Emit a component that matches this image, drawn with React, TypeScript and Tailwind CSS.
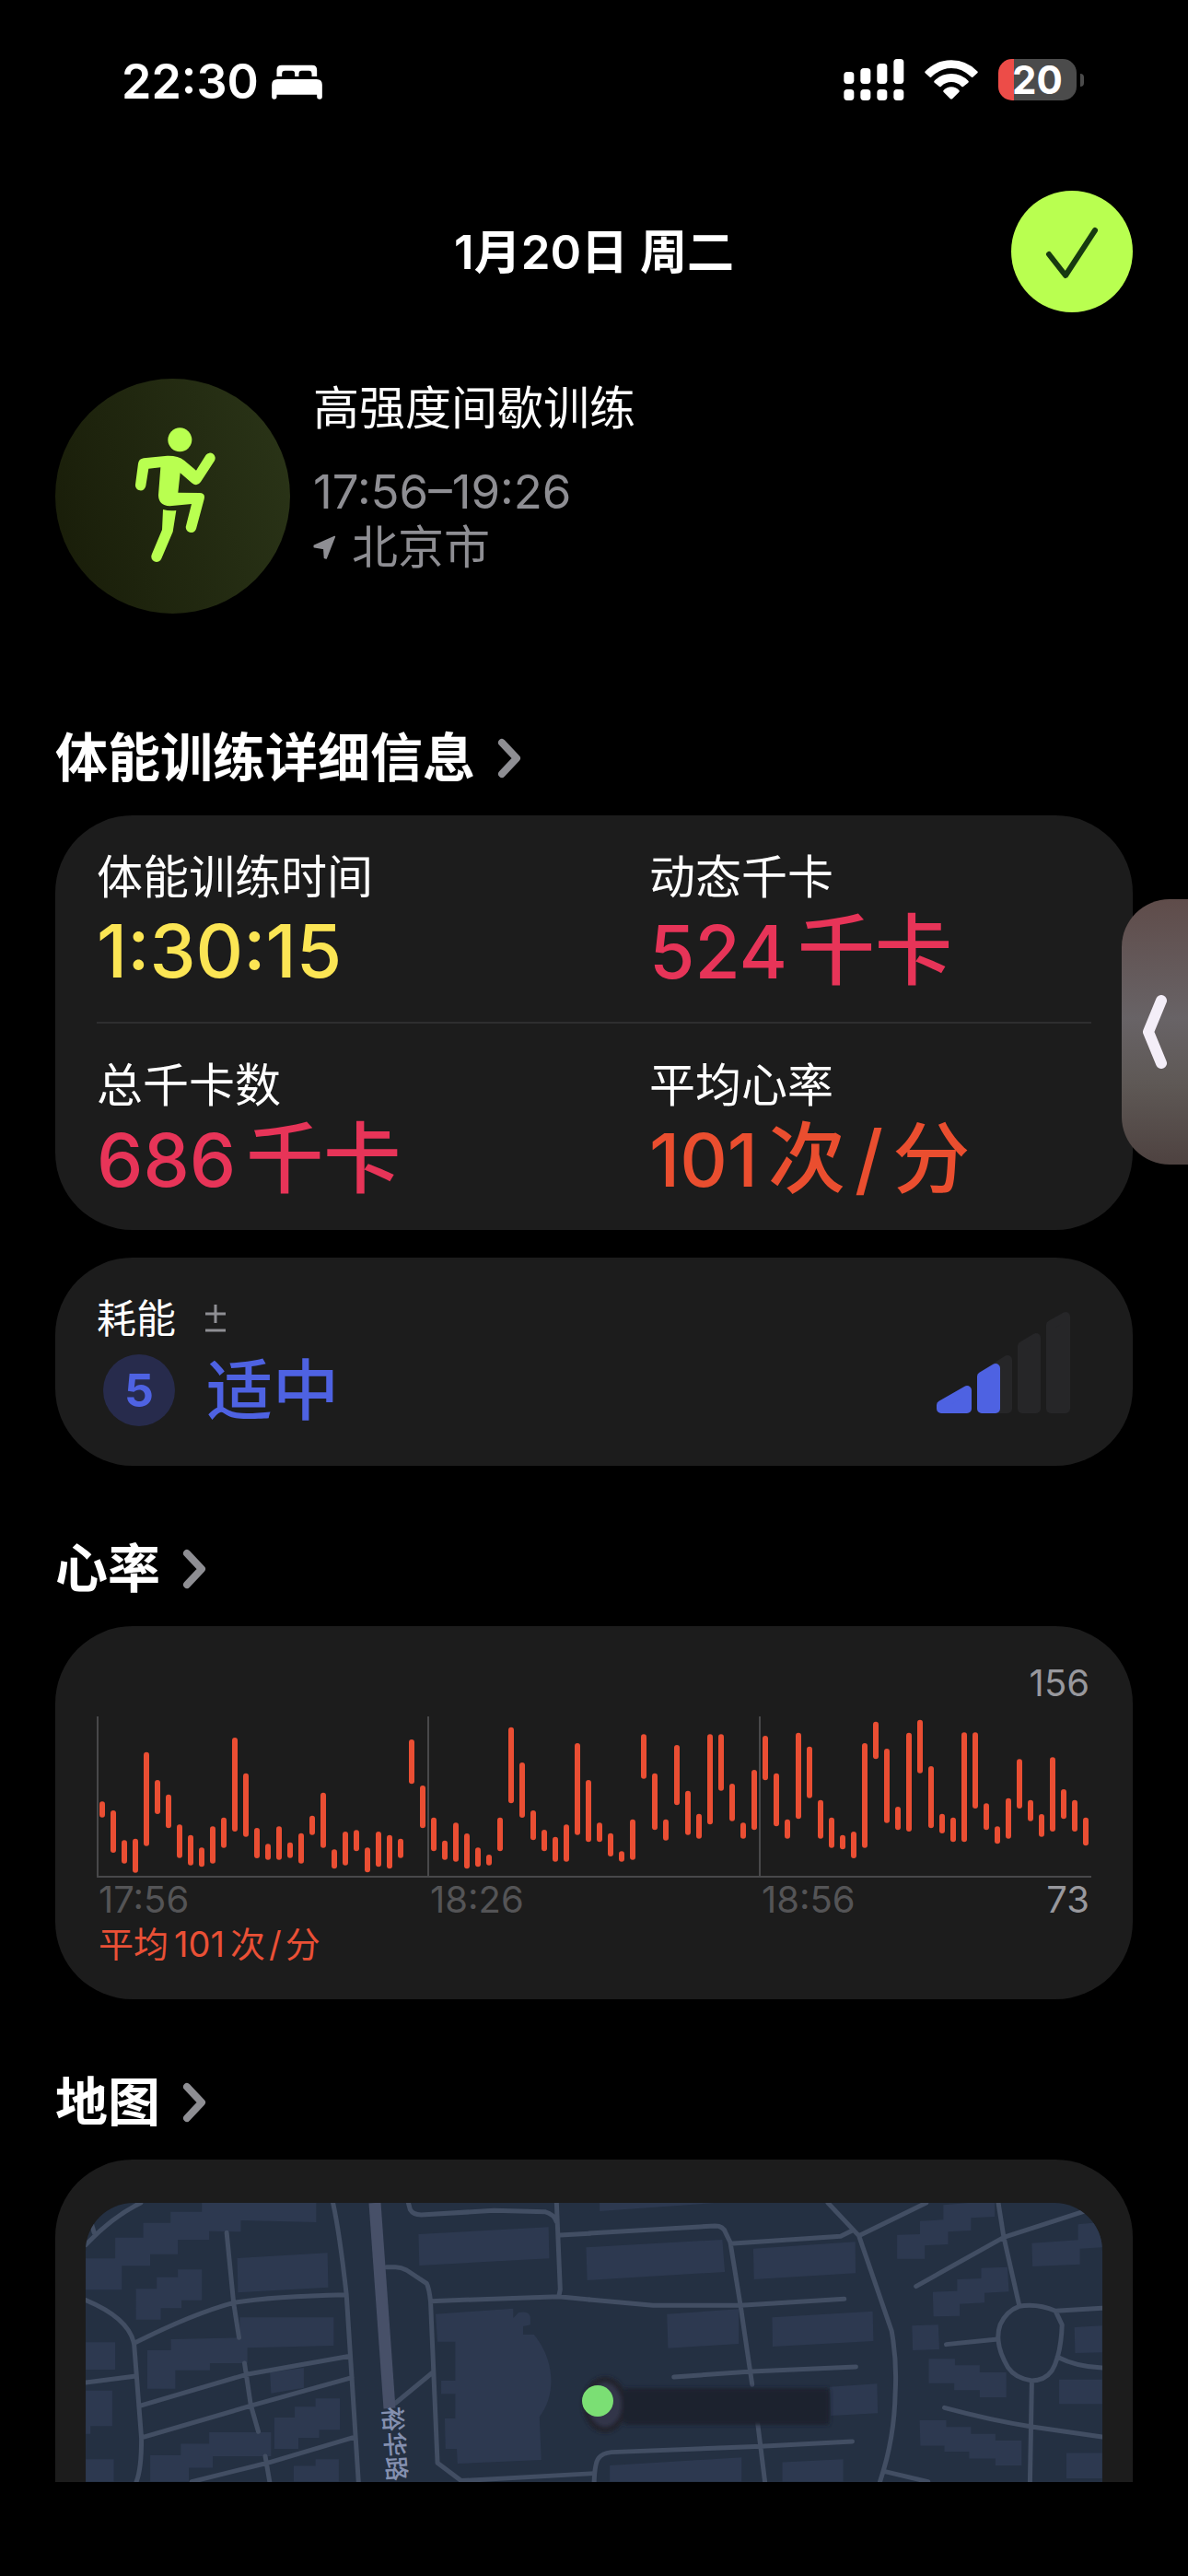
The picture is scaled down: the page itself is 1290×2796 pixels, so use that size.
import React from "react";

type Metric = { label: string; value: string; unit?: string[]; color: string };

const metrics: Metric[] = [
  { label: "体能训练时间", value: "1:30:15", color: "text-[#fbe554]" },
  { label: "动态千卡", value: "524", unit: ["千卡"], color: "text-[#e73458]" },
  { label: "总千卡数", value: "686", unit: ["千卡"], color: "text-[#e73458]" },
  { label: "平均心率", value: "101", unit: ["次", "/", "分"], color: "text-[#ea4e2f]" },
];

// [top, bottom] of every one-minute heart-rate range, in thirds of a pixel below the chart top
const ranges: [number, number][] = [
  [277, 329], [306, 444], [403, 479], [398, 509], [116, 422], [207, 318], [254, 364], [352, 461], [386, 485], [427, 490],
  [358, 479], [329, 428], [69, 375], [185, 392], [363, 462], [415, 467], [358, 467], [410, 461], [380, 479], [323, 386],
  [248, 428], [433, 496], [375, 485], [370, 439], [427, 508], [375, 490], [386, 496], [398, 461], [75, 220], [225, 364],
  [329, 439], [404, 467], [346, 473], [381, 496], [427, 490], [450, 485], [329, 439], [35, 283], [150, 330], [306, 403],
  [369, 439], [392, 473], [352, 473], [87, 386], [207, 409], [346, 409], [380, 456], [439, 473], [335, 467], [58, 203],
  [185, 370], [335, 404], [93, 289], [242, 386], [317, 398], [58, 352], [58, 242], [219, 341], [346, 398], [174, 370],
  [63, 208], [185, 358], [335, 398], [53, 334], [98, 266], [272, 398], [329, 428], [386, 433], [375, 462], [87, 428],
  [17, 139], [105, 347], [294, 370], [53, 375], [11, 185], [162, 364], [317, 381], [329, 409], [52, 409], [52, 300],
  [283, 370], [358, 415], [266, 398], [139, 300], [272, 341], [318, 392], [133, 375], [237, 334], [272, 375], [329, 421],
];

function Chevron() {
  return (
    <svg className="h-[44px] w-[28px]" viewBox="0 0 28 44" fill="none" stroke="#8e8e93" strokeWidth="8" strokeLinecap="round" strokeLinejoin="round" aria-hidden="true">
      <path d="M5 5 L21 22 L5 39" />
    </svg>
  );
}

function SectionLink({ children }: { children: string }) {
  return (
    <h2 className="text-[57px] leading-[72px] font-bold text-white">
      <a href="#" className="inline-flex items-center gap-6">
        {children}
        <Chevron />
      </a>
    </h2>
  );
}

function StatusBar() {
  return (
    <div className="flex h-[108px] items-end justify-between pr-[113px] pl-[132px] pt-16 text-white">
      <div className="flex h-[39px] items-center gap-[14px]">
        <span className="text-[52px] leading-[48px] font-semibold">22:30</span>
        <svg className="h-[38px] w-[55px]" viewBox="522 58 164 114" fill="#fff" aria-hidden="true">
          <path d="M538 97 V76 Q538 60 554 60 H653 Q669 60 669 76 V97 H652 V88 Q652 78 643 78 H619 Q610 78 610 88 V97 H597 V88 Q597 78 588 78 H565 Q555 78 555 88 V97Z" />
          <path d="M522 163 V124 Q522 106 540 106 H668 Q686 106 686 124 V163 Q686 171 678 171 Q669 171 669 163 V156 H538 V163 Q538 171 530 171 Q522 171 522 163Z" />
        </svg>
      </div>
      <div className="flex h-[43px] items-center gap-[22px]">
        <svg className="h-[45px] w-[66px]" viewBox="48 42 196 135" fill="#fff" aria-hidden="true">
          <rect x="48" y="84" width="33" height="39" rx="11" />
          <rect x="102" y="72" width="33" height="51" rx="11" />
          <rect x="156" y="57" width="33" height="66" rx="11" />
          <rect x="210" y="42" width="33" height="81" rx="11" />
          <rect x="48" y="141" width="33" height="36" rx="11" />
          <rect x="102" y="141" width="33" height="36" rx="11" />
          <rect x="156" y="141" width="33" height="36" rx="11" />
          <rect x="210" y="141" width="33" height="36" rx="11" />
        </svg>
        <svg className="h-[43px] w-[58px]" viewBox="311 45 174 127" fill="#fff" aria-hidden="true">
          <path d="M312 82 Q348 45 398 45 Q448 45 484 82 Q485 85 483 87 L468 100 Q465 102 462 99 Q433 71 398 71 Q363 71 334 99 Q331 102 328 100 L313 87 Q311 85 312 82Z" />
          <path d="M342 113 Q365 89 398 89 Q431 89 454 113 Q455 116 453 118 L437 131 Q434 133 431 130 Q417 116 398 116 Q379 116 365 130 Q362 133 359 131 L343 118 Q341 116 342 113Z" />
          <path d="M372 144 Q383 132 398 132 Q413 132 424 144 Q425 147 423 149 L402 170 Q398 173 394 170 L373 149 Q371 147 372 144Z" />
        </svg>
        <div className="flex items-center gap-1">
          <div className="flex h-[45px] w-[85px] items-center justify-center rounded-[15px] bg-[linear-gradient(to_right,#ed4c48_17px,#4b4b4b_17px)] text-[42px] leading-[45px] font-bold">20</div>
          <div className="h-[14px] w-1 rounded-r-full bg-[#4b4b4b]" />
        </div>
      </div>
    </div>
  );
}

function Runner() {
  return (
    <div className="size-[255px] shrink-0 rounded-full bg-[linear-gradient(75deg,#181c08,#2b3518)]">
      <svg className="size-full" viewBox="-210 -117 765 765" fill="#b9ff50" aria-hidden="true">
        <circle cx="196" cy="82" r="39" />
        <path d="M78 142 Q62 144 60 160 L51 228 A17 17 0 0 0 85 232 L94 176 L133 172 L126 262 Q126 296 163 298 L234 291 L216 362 A17 17 0 0 0 249 372 L275 275 Q280 256 260 255 L190 254 L197 190 L235 223 Q252 236 264 219 L309 150 A17 17 0 0 0 281 131 L249 182 L210 149 Q190 133 155 134Z" />
        <path d="M141 309 Q162 315 184 312 L173 382 L136 469 A17 17 0 0 1 104 456 L138 375Z" />
      </svg>
    </div>
  );
}

function HeartChart() {
  return (
    <svg className="block h-[175px] w-full" viewBox="0 0 1080 175" preserveAspectRatio="none" role="img" aria-label="心率图表">
      <g stroke="#48484a" strokeWidth="2">
        <path d="M1 0 V174 M360 0 V174 M720 0 V174 M0 174 H1080" />
      </g>
      <g stroke="#ea4e33" strokeWidth="6" strokeLinecap="round">
        {ranges.map(([top, bottom], i) => (
          <line key={i} x1={6 + i * 12} x2={6 + i * 12} y1={top / 3 + 3} y2={bottom / 3 - 3} />
        ))}
      </g>
    </svg>
  );
}

const westBuildings =
  "M428 483H742V546L535 540V577L448 575V603H362V650H286V688H208V766H109V664H190V596H267V548H342V512H428Z M362 700H428V800H372V826H315V863H247V763H304V725H362Z M525 663L773 646L775 758L527 775Z M532 856H790V948L553 955V1005H450V1028H355V1088H278V963H343V927L532 922Z M109 937H190V1026H109Z M109 1094H182V1210H122V1235H109Z M615 1035L708 1020V1085L618 1103Z M740 1120H807V1222H750V1248H693V1284H627V1182H683V1147H740Z M448 1230H618V1308H458V1346H392V1391H286V1305H370V1268H448Z M109 1318H186V1391H109Z M740 1318H804V1391H680V1340H740Z M1023 585L1380 562L1382 664L1025 687Z M1070 845L1283 827V858L1298 840Q1330 832 1330 860V880L1310 885V912H1340C1400 1000 1400 1110 1355 1180L1360 1320L1130 1332L1128 1284H1097L1095 1185H1124V1105H1085V1062H1124V935H1075Z";
const eastBuildings =
  "M28 483H345L28 510Z M-9 628L365 603L372 708L-6 735Z M450 632L730 610L731 712L452 732Z M213 845L410 829V942L216 956Z M502 856L778 836L780 933L503 951Z M660 1082L790 1072L792 1168L663 1176Z M56 1338L418 1312V1391H56Z M530 1328L697 1318V1391H530Z M972 490L1040 483H1113V528L1048 532V573L985 577V618L921 622V665H845V587L908 585V542L972 538Z M1076 695L1148 692L1152 772L1085 776V808L1017 812V851L945 853L943 773L1010 770V732L1076 729Z M1215 614L1342 604V553L1408 545V628L1347 632V683L1217 690Z M886 883L958 880L961 960L888 963Z M1332 888L1408 883V970L1334 972Z M932 991H1004V1012H1072V1035H1145V1116H1072V1093H1002V1070H932Z M1290 1058H1408V1138H1290Z M907 1191H980V1213H1048V1235H1115V1257H1187V1338H1115V1316H1043V1293H975V1274H909Z M1310 1298H1408V1380H1310Z";
const westRoads =
  "M109 620Q180 530 260 483 M122 540L132 580 M109 800Q230 860 242 945L262 1250Q262 1350 248 1391 M109 1068L242 1048 M242 940Q400 845 515 808Q620 787 825 782 M496 580L515 808L530 922 M788 483Q806 580 825 782L858 1391 M255 1145L550 1042L835 982 M262 1248L565 1143L840 1052 M545 1005L562 1140L583 1228 M400 1391L608 1330L850 1245 M602 1308L614 1391 M995 483L1000 505Q1008 522 1030 522L1230 508L1370 512Q1395 520 1402 545 M1402 483L1412 765L1408 788 M1412 588L1492 583 M935 692H960Q975 692 990 702L1045 745Q1052 760 1056 805L1075 1330L1140 1388L1505 1364 M1056 803L1408 788L1492 798 M960 1135L1062 1035";
const eastRoads =
  "M0 582L345 558Q368 558 374 580L387 612L415 817L447 1075 M462 1200L482 1391 M387 616L690 592L722 573 M655 483L740 590L830 900Q845 1000 840 1100Q838 1250 798 1391 M740 590L925 483 M0 798L175 817H415L700 796 M232 1050L445 1032L732 1017 M13 1391Q15 1330 25 1315Q35 1298 60 1295L470 1276L722 1260 M812 1358L930 1391 M897 755L1138 595L1365 508 M1123 483L1138 595L1180 815 M1180 820Q1230 810 1280 835L1298 880Q1295 980 1270 1030Q1250 1062 1215 1062Q1170 1055 1150 1020Q1110 940 1128 880Q1145 835 1180 820Z M1280 835L1408 826 M980 944L1115 928 M1285 985Q1340 1018 1408 1020 M1215 1062L1210 1391 M975 1150Q1100 1190 1215 1212L1408 1245";

function RouteMap() {
  const west = "matrix(.3954 0 0 .3333 -43 -161)";
  const east = "matrix(.3954 0 0 .3333 547 -161)";
  return (
    <svg className="block h-[303px] w-full rounded-t-[52px] bg-[#243042]" viewBox="0 0 1104 303" preserveAspectRatio="xMidYMin slice" role="img" aria-label="训练地图">
      <defs>
        <filter id="soft" x="-10%" y="-30%" width="120%" height="160%">
          <feGaussianBlur stdDeviation="2" />
        </filter>
      </defs>
      <g fill="#2d3950">
        <path d={westBuildings} transform={west} />
        <path d={eastBuildings} transform={east} />
      </g>
      <g fill="none" stroke="#424e63" strokeWidth="5" strokeLinecap="round" strokeLinejoin="round">
        <path d={westRoads} transform={west} vectorEffect="non-scaling-stroke" />
        <path d={eastRoads} transform={east} vectorEffect="non-scaling-stroke" />
      </g>
      <path d="M314 0 L330 223" stroke="#475068" strokeWidth="13" fill="none" />
      <text fill="#8490b0" fontSize="27" fontWeight="500" transform="translate(323 222) rotate(86)">裕华路</text>
      <g filter="url(#soft)">
        <ellipse cx="564" cy="219" rx="21" ry="27" fill="#30364a" stroke="#20202c" strokeWidth="6" />
        <rect x="584" y="201" width="224" height="40" rx="4" fill="#1a212f" />
      </g>
      <circle cx="556" cy="215" r="17" fill="#7bdf74" />
    </svg>
  );
}

export default function App() {
  return (
    <div className="relative min-h-screen overflow-hidden bg-black font-['Inter','Noto_Sans_CJK_SC',sans-serif] text-white" lang="zh-CN">
      <StatusBar />

      <header className="mt-[99px] grid grid-cols-[1fr_auto_1fr] items-center px-[60px]">
        <h1 className="col-start-2 pt-[2px] text-[51px] leading-[60px] font-semibold">1月20日 周二</h1>
        <button type="button" aria-label="完成" className="size-[132px] justify-self-end rounded-full bg-[#b9ff50]">
          <svg className="size-full" viewBox="0 0 132 132" fill="none" stroke="#173a10" strokeWidth="6" strokeLinecap="round" strokeLinejoin="round">
            <path d="M41 69 L59 92 L91 43" />
          </svg>
        </button>
      </header>

      <main className="px-[60px]">
        <section className="mt-[72px] flex gap-[25px]">
          <Runner />
          <div className="pt-[2px] text-[50px] leading-[60px]">
            <p>高强度间歇训练</p>
            <p className="mt-[31px] text-[51px] text-[#8e8e93]">17:56–19:26</p>
            <p className="flex items-center gap-[17px] text-[#8e8e93]">
              <svg className="h-[26px] w-[25px]" viewBox="633 400 76 78" fill="#8e8e93" stroke="#8e8e93" strokeWidth="5" strokeLinejoin="round" aria-hidden="true">
                <path d="M704 404 L637 434 V438 L669 443 L671 474 L676 475Z" />
              </svg>
              北京市
            </p>
          </div>
        </section>

        <section className="mt-[121px]">
          <SectionLink>体能训练详细信息</SectionLink>
          <dl className="mt-[26px] rounded-[84px] bg-[#1c1c1c] px-[45px]">
            {[0, 2].map((start) => (
              <div key={start} className="grid grid-cols-2 gap-x-[120px] border-b-2 border-[#2e2e2f] pt-[37px] pb-[31px] last:border-0">
                {metrics.slice(start, start + 2).map((m) => (
                  <div key={m.label} className="whitespace-nowrap">
                    <dt className="text-[50px] leading-[60px]">{m.label}</dt>
                    <dd className={`flex h-[96px] items-baseline gap-[11px] text-[84px] leading-[100px] font-medium ${m.color}`}>
                      <span className="text-[80px]">{m.value}</span>
                      {m.unit && (
                        <span className="flex items-baseline gap-[10px]">
                          {m.unit.map((part) => (
                            <span key={part}>{part}</span>
                          ))}
                        </span>
                      )}
                    </dd>
                  </div>
                ))}
              </div>
            ))}
          </dl>

          <div className="mt-[30px] flex items-center justify-between rounded-[84px] bg-[#1c1c1c] py-[40px] pr-[68px] pl-[45px]">
            <div>
              <p className="flex items-center gap-[32px] text-[43px] leading-[52px]">
                耗能
                <svg className="h-[30px] w-[22px]" viewBox="0 0 22 30" stroke="#8e8e93" strokeWidth="3" aria-hidden="true">
                  <path d="M11 0 V20 M0 10 H22 M0 28 H22" />
                </svg>
              </p>
              <p className="mt-[10px] ml-[7px] flex items-center gap-[34px] text-[#4e62e2]">
                <span className="flex size-[78px] items-center justify-center rounded-full bg-[#272b4c] text-[50px] leading-none font-bold">5</span>
                <span className="text-[72px] leading-[84px] font-medium">适中</span>
              </p>
            </div>
            <svg className="h-[111px] w-[145px]" viewBox="0 0 145 111" strokeWidth="10" strokeLinejoin="round" role="img" aria-label="耗能等级 5">
              <g fill="#262628" stroke="#262628">
                <path d="M49 106H77V53L49 71Z" />
                <path d="M93 106H108V29L93 38Z" />
                <path d="M124 106H140V6L124 15Z" />
              </g>
              <g fill="#4e62e2" stroke="#4e62e2">
                <path d="M5 106H33V86L5 102Z" />
                <path d="M49 106H64V62L49 71Z" />
              </g>
            </svg>
          </div>
        </section>

        <section className="mt-[76px]">
          <SectionLink>心率</SectionLink>
          <div className="mt-[26px] rounded-[84px] bg-[#1c1c1c] px-[45px] pt-[38px] pb-[36px] text-[40px] leading-[48px]">
            <p className="pr-[2px] text-right text-[#98989d]">156</p>
            <div className="mt-3">
              <HeartChart />
            </div>
            <div className="grid grid-cols-3 text-[#545456]">
              <span className="pl-[2px]">17:56</span>
              <span className="pl-[2px]">18:26</span>
              <span className="flex justify-between px-[2px]">
                18:56
                <span className="text-[#98989d]">73</span>
              </span>
            </div>
            <p className="flex items-baseline gap-[6px] pl-[2px] text-[38px] text-[#ea5036]">
              <span>平均</span>
              <span>101</span>
              <span className="flex gap-1">
                <span>次</span>
                <span>/</span>
                <span>分</span>
              </span>
            </p>
          </div>
        </section>

        <section className="mt-[76px]">
          <SectionLink>地图</SectionLink>
          <div className="mt-[26px] rounded-t-[84px] bg-[#1c1c1c] px-[33px] pt-[47px]">
            <RouteMap />
          </div>
        </section>
      </main>

      <button type="button" aria-label="展开侧边栏" className="absolute top-[976px] right-0 flex h-[288px] w-[72px] items-center justify-center rounded-l-[52px] bg-[linear-gradient(to_bottom,#5f4c4a,#686366_45%,#5e5855_70%,#4e4240)]">
        <svg className="h-[80px] w-[26px]" viewBox="0 0 26 80" fill="none" stroke="#f4eef8" strokeWidth="12" strokeLinecap="round" strokeLinejoin="round">
          <path d="M20 6 L6 40 L20 74" />
        </svg>
      </button>
    </div>
  );
}
